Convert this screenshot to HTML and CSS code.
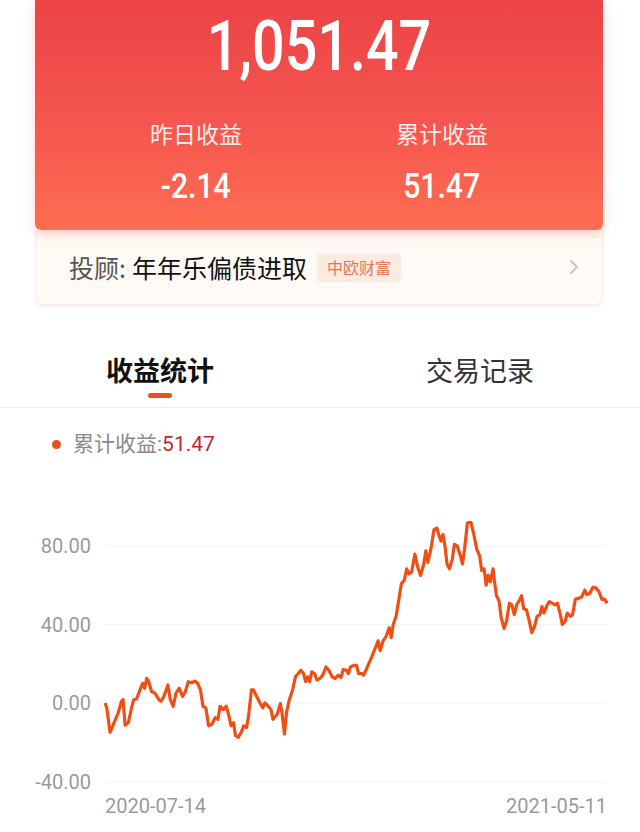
FILE: index.html
```html
<!DOCTYPE html>
<html>
<head>
  <title>收益详情</title>
  <link rel="stylesheet" href="styles.css">
</head>
<body>
  <div class="card">
    <div class="summary">
      <div class="total"><span class="narrow">1,051.47</span></div>
      <div class="stats">
        <div class="stat">
          <div class="stat-label">昨日收益</div>
          <div class="stat-value"><span class="narrow">-2.14</span></div>
        </div>
        <div class="stat">
          <div class="stat-label">累计收益</div>
          <div class="stat-value"><span class="narrow">51.47</span></div>
        </div>
      </div>
    </div>
    <div class="advisor">
      <span class="advisor-key">投顾:</span>
      <span class="advisor-name">年年乐偏债进取</span>
      <span class="tag">中欧财富</span>
      <svg class="chevron" width="10" height="16" viewBox="0 0 10 16">
        <polyline points="2,2 8,8 2,14" fill="none" stroke="#c4c4c4" stroke-width="1.8" stroke-linecap="round" stroke-linejoin="round"/>
      </svg>
    </div>
  </div>

  <div class="tabs">
    <div class="tab active">收益统计<span class="tab-bar"></span></div>
    <div class="tab">交易记录</div>
  </div>

  <div class="legend">
    <span class="legend-dot"></span>
    <span class="legend-key">累计收益:</span><span class="legend-value">51.47</span>
  </div>

  <svg class="chart" width="640" height="312" viewBox="0 0 640 312">
    <g class="grid">
      <line x1="105" y1="25" x2="607" y2="25"/>
      <line x1="105" y1="103.5" x2="607" y2="103.5"/>
      <line x1="105" y1="182" x2="607" y2="182"/>
      <line x1="105" y1="261" x2="607" y2="261"/>
    </g>
    <g class="axis">
      <text x="91" y="32" text-anchor="end">80.00</text>
      <text x="91" y="110.5" text-anchor="end">40.00</text>
      <text x="91" y="189" text-anchor="end">0.00</text>
      <text x="91" y="268" text-anchor="end">-40.00</text>
      <text x="105" y="292">2020-07-14</text>
      <text x="607" y="292" text-anchor="end">2021-05-11</text>
    </g>
    <g transform="matrix(0.4075 0 0 0.327 0 -17.5)">
      <polyline class="line" points="258,610 262,625 270,700 280,670 290,640 298,605 302,600 307,678 315,670 322,630 328,600 335,598 342,575 350,550 355,565 360,535 365,545 372,575 380,580 390,600 395,605 402,590 412,555 418,600 425,620 432,580 440,565 448,590 455,575 462,545 470,548 478,543 485,550 492,570 498,620 505,625 512,680 520,675 528,655 535,660 540,620 548,630 555,620 562,650 567,680 573,670 578,710 585,715 592,700 598,680 605,685 610,650 617,570 622,570 630,590 638,610 645,625 650,610 658,620 665,630 670,660 680,645 688,612 692,640 698,705 703,640 710,600 718,570 725,530 732,520 738,510 745,520 750,545 755,530 760,545 765,515 772,520 778,540 785,535 792,525 800,500 807,510 815,530 822,535 830,525 837,532 842,508 850,510 855,520 860,500 868,495 875,495 880,520 888,520 892,525 898,510 905,490 912,470 920,445 928,420 933,450 940,420 947,408 955,380 960,410 965,370 972,345 978,300 985,245 992,235 998,200 1003,215 1010,210 1018,155 1025,195 1032,220 1040,185 1045,145 1050,180 1058,135 1065,80 1072,75 1078,100 1082,115 1087,95 1092,130 1097,185 1103,200 1110,170 1115,125 1122,130 1130,160 1135,185 1140,140 1147,60 1155,55 1162,90 1170,140 1177,160 1182,205 1188,200 1193,250 1198,220 1203,240 1210,200 1213,235 1218,280 1225,300 1230,350 1237,382 1243,360 1250,305 1256,310 1262,340 1268,310 1275,295 1280,282 1285,322 1292,325 1298,355 1305,395 1312,375 1318,345 1325,340 1330,315 1335,335 1342,312 1348,300 1355,305 1362,310 1368,305 1375,340 1380,370 1387,360 1392,335 1400,345 1405,340 1412,292 1420,290 1428,285 1435,265 1440,278 1447,275 1455,256 1462,258 1470,270 1477,293 1483,292 1490,305"/>
    </g>
  </svg>
</body>
</html>
```

FILE: styles.css
```css
body {
  margin: 0;
  background-color: #ffffff;
  font-family: Roboto, "Noto Sans CJK SC", sans-serif;
  color: #222;
  overflow: hidden;
}

.card {
  margin: 0 37px 0 35px;
}

.summary {
  background: linear-gradient(180deg, #ec4347 0%, #f4544e 50%, #fe6d52 100%);
  border-radius: 0 0 6px 6px;
  box-shadow: 0 4px 10px rgba(250, 100, 80, 0.3);
  padding: 6px 38px 23px;
  color: #fff;
  text-align: center;
  position: relative;
}

/* DIN-like condensed digits */
.narrow {
  display: inline-block;
  font-family: Roboto, sans-serif;
  font-weight: 500;
  transform: scaleX(0.82);
}

.total {
  font-size: 70px;
  line-height: 80px;
}

.stats {
  display: grid;
  grid-template-columns: 1fr 1fr;
  margin-top: 32px;
}

.stat-label {
  font-family: "Noto Sans CJK SC", sans-serif;
  font-size: 23px;
  line-height: 30px;
  color: rgba(255, 255, 255, 0.9);
}

.stat-value {
  font-size: 35px;
  line-height: 40px;
  margin-top: 19px;
}

.stat-value .narrow {
  transform: scaleX(0.86);
}

.advisor {
  display: flex;
  align-items: center;
  height: 75px;
  padding: 0 23px 0 33px;
  background-color: #fffaf5;
  border: 1px solid #f6eee4;
  border-top: none;
  border-radius: 0 0 6px 6px;
  box-sizing: border-box;
  box-shadow: 0 2px 4px rgba(200, 180, 150, 0.15);
  font-family: "Noto Sans CJK SC", sans-serif;
  font-size: 25px;
}

.advisor-key {
  color: #555;
  margin-right: 6px;
}

.advisor-name {
  color: #111;
}

.tag {
  margin-left: 10px;
  padding: 0 10px;
  height: 29px;
  line-height: 29px;
  font-size: 16px;
  color: #df7a58;
  background-color: #fdebe2;
  border-radius: 3px;
}

.chevron {
  margin-left: auto;
}

.tabs {
  display: grid;
  grid-template-columns: 1fr 1fr;
  margin-top: 47px;
  padding-bottom: 9px;
  border-bottom: 1px solid #eeeeee;
  font-family: "Noto Sans CJK SC", sans-serif;
  font-size: 27px;
  line-height: 36px;
  color: #333;
}

.tab {
  display: flex;
  flex-direction: column;
  align-items: center;
  height: 46px;
}

.tab.active {
  font-weight: bold;
  color: #111;
}

.tab-bar {
  width: 24px;
  height: 5px;
  margin-top: 5px;
  border-radius: 3px;
  background-color: #e8501e;
}

.legend {
  display: flex;
  align-items: center;
  padding: 22px 0 0 52px;
  font-size: 21px;
  line-height: 28px;
}

.legend-dot {
  width: 9px;
  height: 9px;
  border-radius: 50%;
  background-color: #e8501e;
  margin-right: 12px;
}

.legend-key {
  color: #8a8a8a;
}

.legend-value {
  color: #c0272d;
}

.chart {
  display: block;
  margin-top: 63px;
}

.grid line {
  stroke: #f3f3f3;
  stroke-width: 1;
}

.axis text {
  font-family: Roboto, sans-serif;
  font-size: 20px;
  fill: #9a9a9a;
}

.line {
  fill: none;
  stroke: #f04e14;
  stroke-width: 3.2;
  stroke-linejoin: round;
  vector-effect: non-scaling-stroke;
}
```
